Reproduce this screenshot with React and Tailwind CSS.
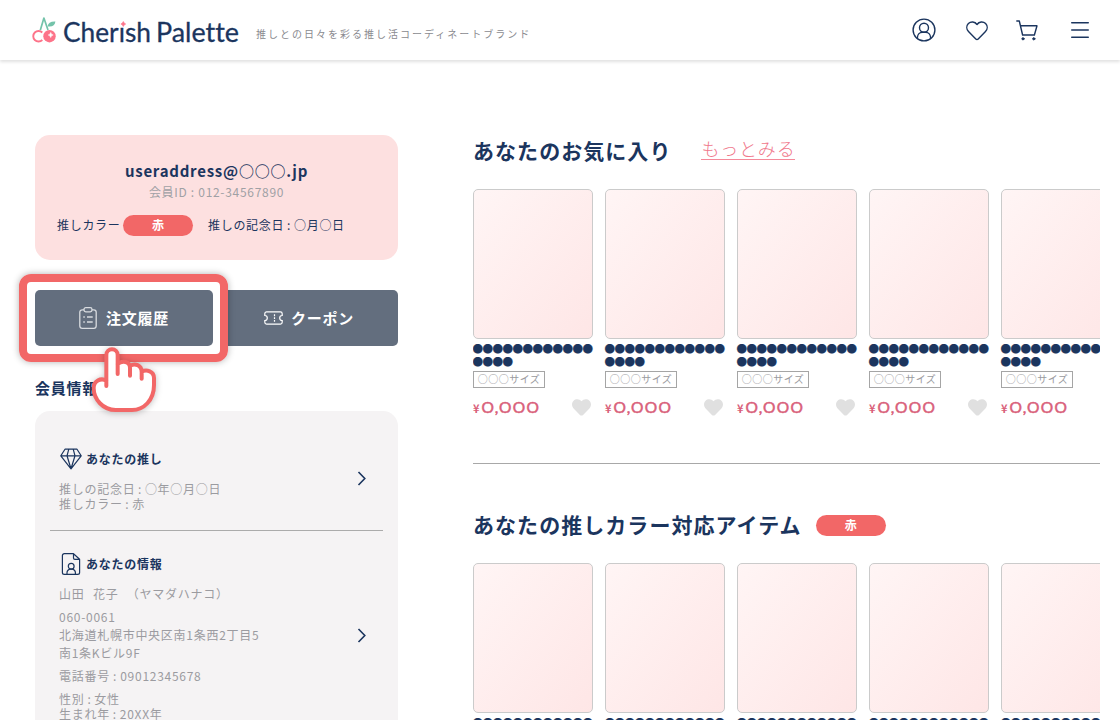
import clsx from "clsx";

const favorites = [1, 2, 3, 4, 5];
const colorItems = [1, 2, 3, 4, 5];

function LogoMark() {
  return (
    <svg className="h-[28px] w-[25px] shrink-0" viewBox="0 0 25 28" fill="none">
      <path d="M8.3 14.2 11.9 2 16 14" stroke="#74c3aa" strokeWidth="1.7" strokeLinejoin="round" />
      <path d="M15.6 10.4c.5-3.4 3-5 7.8-4.8-.5 3.8-3 5.6-7.8 4.8Z" fill="#74c3aa" />
      <path d="M10.3 16.5a5.3 5.3 0 1 0 0 7.500" stroke="#fd7389" strokeWidth="1.9" />
      <circle cx="17.5" cy="20.2" r="6.2" fill="#fd7389" />
      <path d="M18.7 16.400q.4 2.200 2.500 2.600-2.100.4-2.500 2.600-.4-2.200-2.500-2.600 2.100-.4 2.500-2.600Z" fill="#fff" stroke="#fff" strokeWidth=".5" />
    </svg>
  );
}

function LogoType() {
  return (
    <svg className="ml-[5px] h-[44px] w-[180px] overflow-visible" viewBox="0 0 180 44">
      <g fontSize="27" fill="#1b355e" stroke="#1b355e" strokeWidth=".3" className="font-['Lato',sans-serif] [font-variant-ligatures:none]">
        <text x="1" y="33.5" textLength="88" lengthAdjust="spacingAndGlyphs">
          Cherish
        </text>
        <text x="94" y="33.5" textLength="83" lengthAdjust="spacingAndGlyphs">
          Palette
        </text>
      </g>
      <path d="M58 11h6.500v7.500H58z" fill="#fff" />
      <path d="M61.300 13.500q.6 1.900 2.400 2.500-1.800.6-2.400 2.500-.6-1.900-2.400-2.500 1.800-.6 2.400-2.500Z" fill="#fd7389" stroke="#fd7389" strokeWidth=".6" />
    </svg>
  );
}

function UserIcon() {
  return (
    <svg className="h-6 w-6" viewBox="0 0 24 24" fill="none" stroke="#1b355e" strokeWidth="1.4">
      <circle cx="12" cy="12" r="10.9" />
      <circle cx="12" cy="9.7" r="4.5" />
      <path d="M5.400 20.500v-.7c0-3.400 2.400-5.600 5.100-5.600h3c2.700 0 5.100 2.200 5.100 5.600v.7" />
    </svg>
  );
}

function HeartIcon() {
  return (
    <svg className="h-[20px] w-[22px]" viewBox="0 0 22 20" fill="none" stroke="#1b355e" strokeWidth="1.4" strokeLinejoin="round">
      <path d="M11 3.500C8.900.3 4.700.200 2.400 2.600.200 4.900.3 8.200 2.500 10.500l7.300 7.600c.7.7 1.700.7 2.400 0l7.300-7.600c2.200-2.300 2.300-5.600.1-7.900C17.300.200 13.100.3 11 3.500Z" />
    </svg>
  );
}

function CartIcon() {
  return (
    <svg className="h-[21px] w-[22px]" viewBox="0 0 22 21" fill="none" stroke="#1b355e" strokeWidth="1.4" strokeLinecap="round" strokeLinejoin="round">
      <path d="M.8 1h2.500L6.600 15h11.800l2.600-9.200H4.500" />
      <circle cx="7" cy="18.8" r="1.1" fill="#1b355e" strokeWidth="1" />
      <circle cx="17.8" cy="18.8" r="1.1" fill="#1b355e" strokeWidth="1" />
    </svg>
  );
}

function Header() {
  return (
    <header className="flex h-[60px] items-center bg-white pl-[32px] shadow-[0_2px_3px_rgba(0,0,0,0.12)]">
      <LogoMark />
      <LogoType />
      <p className="mt-[7px] ml-[14px] text-[10px] leading-none tracking-[2px] text-[#8a8a8f]">
        推しとの日々を彩る推し活コーディネートブランド
      </p>
      <nav className="mr-[31px] ml-auto flex items-center">
        <UserIcon />
        <span className="mt-[2px] ml-[30px]"><HeartIcon /></span>
        <span className="mt-[1px] ml-[28px]"><CartIcon /></span>
        <svg className="ml-[33px] h-[18px] w-[18px]" viewBox="0 0 18 18" stroke="#1b355e" strokeWidth="1.4" strokeLinecap="round">
          <path d="M.7 1.800h16.600M.7 9h16.600M.7 16.200h16.600" />
        </svg>
      </nav>
    </header>
  );
}

function ColorBadge({ className }) {
  return (
    <span className={clsx("flex h-[21px] w-[70px] items-center justify-center rounded-full bg-[#f26767] pb-[1px] text-[12px] leading-none font-bold text-white", className)}>
      赤
    </span>
  );
}

function ProfileCard() {
  return (
    <section className="h-[125px] rounded-[15px] bg-[#fde0e0] pt-[25px] text-[12px]">
      <p className="text-center text-[15px] leading-[22px] font-bold tracking-[0.75px]">useraddress@○○○.jp</p>
      <p className="text-center leading-[20px] tracking-[0.7px] text-[#a0a0a5]">会員ID : 012-34567890</p>
      <div className="mt-[13px] flex h-[21px] items-center pl-[22px] tracking-[0.7px]">
        <span className="w-[66px] pb-[1px] whitespace-nowrap">推しカラー</span>
        <ColorBadge className="tracking-normal" />
        <span className="ml-[15px] pb-[1px] [word-spacing:-0.5px]">推しの記念日 : ○月○日</span>
      </div>
    </section>
  );
}

function OrderIcon() {
  return (
    <svg className="h-[22px] w-[18px]" viewBox="0 0 18 22" fill="none" stroke="#d9dce0" strokeWidth="1.3">
      <path d="M5 2.800H3.200A2.400 2.400 0 0 0 .8 5.200V19a2.400 2.400 0 0 0 2.400 2.300h11.600a2.400 2.400 0 0 0 2.400-2.300V5.200a2.400 2.400 0 0 0-2.400-2.400H13" />
      <rect x="5" y=".7" width="8" height="4.2" rx="1.8" />
      <path d="M4.300 10h1.500M8 10h5.700M4.300 15h1.500M8 15h5.700" />
    </svg>
  );
}

function CouponIcon() {
  return (
    <svg className="h-[14px] w-[19px]" viewBox="0 0 19 14" fill="none" stroke="#fff" strokeWidth="1.2">
      <path d="M2.600.9h13.800a1.800 1.800 0 0 1 1.800 1.800v1.800a2.500 2.500 0 0 0 0 5v1.800a1.800 1.800 0 0 1-1.800 1.800H2.600a1.800 1.800 0 0 1-1.800-1.800V9.500a2.500 2.500 0 0 0 0-5V2.700A1.800 1.800 0 0 1 2.600.9Z" />
      <path d="M10.500 3.200v2M10.500 6.300v1.600M10.500 9v1.800" />
    </svg>
  );
}

function Pointer() {
  return (
    <svg className="absolute top-[72px] left-[71px] h-[72px] w-[70px] drop-shadow-[0_1px_3px_rgba(0,0,0,0.25)]" viewBox="240 244 210 216">
      <path
        d="M289 364V271a17 17 0 0 1 34 0v22c13-9 32-8 36 8 14-9 31-4 35 16 17-6 38 0 38 23v21c0 46-31 75-66 75h-49c-38 0-66-32-66-66 0-20 21-32 38-22Z"
        fill="#fff"
      />
      <path
        d="M289 364V271a17 17 0 0 1 34 0v57M323 298c14-12 37-8 37 11v24M360 304c14-10 35-3 35 18v20M395 321c15-8 37-1 37 19v21c0 46-31 75-66 75h-49c-38 0-66-32-66-66 0-20 21-32 38-22"
        fill="none"
        stroke="#f26767"
        strokeWidth="12"
        strokeLinecap="round"
        strokeLinejoin="round"
      />
    </svg>
  );
}

function Actions() {
  return (
    <div className="relative mt-[30px] flex gap-[7px] text-[15px] font-bold tracking-[0.75px] text-white">
      <button className="flex h-[56px] w-[178px] items-center justify-center gap-[9px] rounded-[5px] bg-[#636e7e]">
        <OrderIcon />
        注文履歴
      </button>
      <button className="flex h-[56px] w-[178px] items-center justify-center gap-[8px] rounded-[5px] bg-[#636e7e]">
        <CouponIcon />
        クーポン
      </button>
      {/* highlight over the order history button */}
      <div className="pointer-events-none absolute top-[-16px] left-[-16px] h-[88px] w-[209px]">
        <div className="h-full w-full rounded-[12px] border-[8px] border-[#f26767] shadow-[0_0_7px_rgba(0,0,0,0.3)]" />
        <Pointer />
      </div>
    </div>
  );
}

function Chevron({ className }) {
  return (
    <svg className={clsx("h-[15px] w-[10px]", className)} viewBox="0 0 10 15" fill="none" stroke="#1b355e" strokeWidth="1.6">
      <path d="m1.500 1 6.300 6.500L1.500 14" />
    </svg>
  );
}

function DiamondIcon() {
  return (
    <svg className="h-[22px] w-[22px]" viewBox="0 0 22 22" fill="none" stroke="#1b355e" strokeWidth="1.2" strokeLinejoin="round">
      <path d="M5 1.200h12l4.200 6.600L11 20.800.8 7.800 5 1.200ZM.8 7.800h20.400M8.800 1.200 7 7.800l4 13 4-13-1.800-6.600" />
    </svg>
  );
}

function FileUserIcon() {
  return (
    <svg className="h-[22px] w-[22px]" viewBox="0 0 22 22" fill="none" stroke="#1b355e" strokeWidth="1.2" strokeLinejoin="round">
      <path d="M13.500.7H4.300a1.900 1.900 0 0 0-1.900 1.900v16.800a1.900 1.900 0 0 0 1.900 1.900h13.400a1.900 1.900 0 0 0 1.900-1.900V6.300L13.500.7Zm0 0v4.200a1.400 1.400 0 0 0 1.400 1.400h4.700" />
      <circle cx="11.2" cy="13.2" r="2.9" />
      <path d="M7 21.200v-1.400a3.500 3.500 0 0 1 3.500-3.600h1.400a3.500 3.500 0 0 1 3.500 3.600v1.400" />
    </svg>
  );
}

function MemberInfo() {
  return (
    <section className="h-[360px] rounded-t-[15px] bg-[#f5f3f4] px-[15px] pt-[37px] text-[12px] tracking-[0.73px] text-[#9b9ba0]">
      <div className="flex h-[83px] items-center justify-between border-b border-[#ababab] pr-[16px] pl-[9px]">
        <div className="h-full">
          <h3 className="ml-[1px] flex h-[22px] items-center gap-[4px] font-bold text-[#1b355e]">
            <DiamondIcon />
            あなたの推し
          </h3>
          <p className="mt-[11px] leading-[15px] [word-spacing:-0.7px]">推しの記念日 : ○年○月○日</p>
          <p className="leading-[15px] [word-spacing:-0.7px]">推しカラー : 赤</p>
        </div>
        <Chevron className="-mt-[22px]" />
      </div>
      <div className="flex justify-between pt-[22px] pr-[16px] pl-[9px]">
        <div>
          <h3 className="ml-[1px] flex h-[22px] items-center gap-[4px] font-bold text-[#1b355e]">
            <FileUserIcon />
            あなたの情報
          </h3>
          <p className="mt-[10px] leading-[18px] whitespace-pre [word-spacing:0.8px]">山田  花子  （ヤマダハナコ）</p>
          <p className="mt-[5px] leading-[18px]">060-0061</p>
          <p className="leading-[18px]">北海道札幌市中央区南1条西2丁目5</p>
          <p className="leading-[18px]">南1条Kビル9F</p>
          <p className="mt-[5px] leading-[18px] [word-spacing:-0.3px]">電話番号 : 09012345678</p>
          <p className="mt-[6px] leading-[15px] [word-spacing:-0.5px]">性別 : 女性</p>
          <p className="leading-[15px] [word-spacing:-0.5px]">生まれ年 : 20XX年</p>
        </div>
        <Chevron className="mt-[75px]" />
      </div>
    </section>
  );
}

function ProductCard() {
  return (
    <article className="w-[120px] shrink-0">
      <div className="h-[150px] rounded-[5px] border border-[#cbcbcb] bg-linear-to-br from-[#fff5f5] to-[#fee6e6]" />
      <p className="mt-[3px] -ml-[0.5px] text-[10.5px] leading-[13px] tracking-[-0.5px] break-all [-webkit-text-stroke:0.2px]">●●●●●●●●●●●●●●●●</p>
      <div className="mt-[3px] flex h-[17px] w-[72px] items-center justify-center border border-[#a5a5a5] pb-[1px] text-[10px] leading-none tracking-[0.5px] whitespace-nowrap text-[#9a9a9e]">
        ○○○サイズ
      </div>
      <div className="mt-[11px] flex h-[17px] items-center justify-between text-[#d9607a]">
        <p className="flex items-baseline leading-none">
          <span className="text-[11px] font-bold">¥</span>
          <span className="ml-[2px] font-['Lato',sans-serif] text-[15.5px] tracking-[1.25px] [-webkit-text-stroke:0.5px]">O,OOO</span>
        </p>
        <svg className="mr-[2px] h-[17px] w-[19px]" viewBox="0 0 19 17" fill="#e0e0e0">
          <path d="M9.500 2.300C7.600-.2 3.800-.5 1.600 1.700c-2.100 2.200-2.100 5.500 0 7.700l6.300 6.500c.9.9 2.300.9 3.200 0l6.300-6.500c2.100-2.200 2.100-5.500 0-7.700-2.200-2.200-6-1.900-7.900.6Z" />
        </svg>
      </div>
    </article>
  );
}

export default function App() {
  return (
    <div className="h-[720px] w-[1120px] overflow-hidden bg-white font-['Noto_Sans_CJK_JP',sans-serif] text-[#1b355e]">
      <Header />
      <div className="flex pt-[75px] pl-[35px]">
        <aside className="w-[363px] shrink-0">
          <ProfileCard />
          <Actions />
          <h2 className="mt-[32px] mb-[13px] text-[15px] leading-[20px] font-bold tracking-[0.75px]">会員情報</h2>
          <MemberInfo />
        </aside>
        <main className="ml-[75px] w-[627px] overflow-hidden">
          <section className="h-[329px] border-b border-[#a8a8a8]">
            <div className="flex h-[54px]">
              <h2 className="text-[21px] leading-[31px] font-bold tracking-[1.05px]">あなたのお気に入り</h2>
              <a href="#" className="mt-[5px] ml-[30px] h-[20px] border-b border-[#f48a9a] text-[18px] leading-[17px] font-light tracking-[0.8px] text-[#f0788b]">
                もっとみる
              </a>
            </div>
            <div className="flex gap-[12px]">
              {favorites.map((id) => (
                <ProductCard key={id} />
              ))}
            </div>
          </section>
          <section className="pt-[45px]">
            <div className="flex h-[54px]">
              <h2 className="text-[21px] leading-[31px] font-bold tracking-[1.05px]">あなたの推しカラー対応アイテム</h2>
              <ColorBadge className="mt-[6px] ml-[14px]" />
            </div>
            <div className="flex gap-[12px]">
              {colorItems.map((id) => (
                <ProductCard key={id} />
              ))}
            </div>
          </section>
        </main>
      </div>
    </div>
  );
}
